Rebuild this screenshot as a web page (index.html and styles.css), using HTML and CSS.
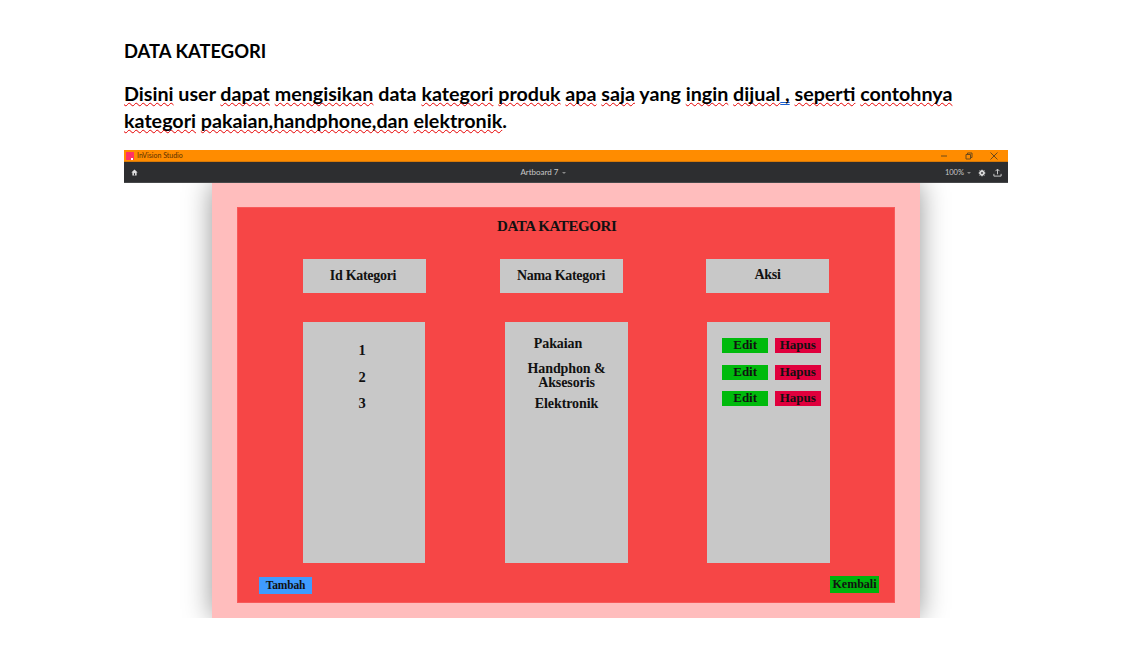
FILE: index.html
```html
<!DOCTYPE html>
<html lang="id">
<head>
<meta charset="utf-8">
<title>Data Kategori</title>
<link rel="stylesheet" href="styles.css">
</head>
<body>
<main class="doc">
  <h1 class="doc-title">DATA KATEGORI</h1>
  <p class="doc-text"><span class="sp">Disini</span> user <span class="sp">dapat</span> <span class="sp">mengisikan</span> data <span class="sp">kategori</span> <span class="sp">produk</span> <span class="sp">apa</span> <span class="sp">saja</span> yang <span class="sp">ingin</span> <span class="sp">dijual</span><span class="gr"> ,</span> <span class="sp">seperti</span> <span class="sp">contohnya</span><br><span class="sp">kategori</span> <span class="sp">pakaian,handphone,dan</span> <span class="sp">elektronik</span>.</p>
  <section class="window">
    <header class="titlebar">
      <span class="logo"><span class="logo-dot"></span></span>
      <span class="app-name">InVision Studio</span>
      <span class="win-controls">
        <svg class="win-icon" viewBox="0 0 10 10"><path d="M2 5h6" /></svg>
        <svg class="win-icon" viewBox="0 0 10 10"><path d="M2 3.500h4.500v4.500H2zM3.500 3.500V2H8v4.500H6.500" /></svg>
        <svg class="win-icon" viewBox="0 0 10 10"><path d="M1.500 1.500l7 7M8.500 1.500l-7 7" /></svg>
      </span>
    </header>
    <nav class="toolbar">
      <svg class="home" viewBox="0 0 10 10"><path d="M5 .8L.5 5h1.500v4.200h6V5h1.500z" /><path class="home-door" d="M4.200 6h1.600v3.200H4.200z" /></svg>
      <span class="board-name">Artboard 7<span class="caret"></span></span>
      <span class="tools">
        <span class="zoom-level">100%<span class="caret"></span></span>
        <svg class="gear" viewBox="0 0 10 10"><circle cx="5" cy="5" r="3" /><circle class="gear-hole" cx="5" cy="5" r="1.100" /><path d="M5 .8v1.500M5 7.700v1.500M.8 5h1.500M7.700 5h1.500M2 2l1 1M7 7l1 1M8 2L7 3M3 7L2 8" /></svg>
        <svg class="share" viewBox="0 0 10 10"><path d="M5 7V1.500M2.800 3.500L5 1.200l2.200 2.300M1 6.500v2.500h8V6.500" /></svg>
      </span>
    </nav>
    <div class="canvas">
      <div class="artboard">
        <div class="panel">
          <h2 class="panel-title">DATA KATEGORI</h2>
          <div class="head-row">
            <div class="head-cell head-id">Id Kategori</div>
            <div class="head-cell head-name">Nama Kategori</div>
            <div class="head-cell head-aksi">Aksi</div>
          </div>
          <div class="body-row">
            <div class="col col-id">
              <div class="id-item">1</div>
              <div class="id-item">2</div>
              <div class="id-item">3</div>
            </div>
            <div class="col col-name">
              <div class="name-first">Pakaian</div>
              <div class="name-item">Handphon &amp;<br>Aksesoris</div>
              <div class="name-last">Elektronik</div>
            </div>
            <div class="col col-action">
              <div class="action-row"><span class="btn edit">Edit</span><span class="btn hapus">Hapus</span></div>
              <div class="action-row"><span class="btn edit">Edit</span><span class="btn hapus">Hapus</span></div>
              <div class="action-row"><span class="btn edit">Edit</span><span class="btn hapus">Hapus</span></div>
            </div>
          </div>
          <div class="foot-row">
            <span class="btn-tambah">Tambah</span>
            <span class="btn-kembali">Kembali</span>
          </div>
        </div>
      </div>
    </div>
  </section>
</main>
</body>
</html>
```
FILE: styles.css
```css
* { box-sizing: border-box; }
html, body { margin: 0; padding: 0; background: #fff; }
body { width: 1136px; height: 652px; overflow: hidden; }
.doc { padding: 40px 0 0 124px; width: 1008px; font-family: "Lato", "Open Sans", sans-serif; color: #000; }
.doc-title { margin: 0; font-size: 18.400px; line-height: 23px; font-weight: 700; }
.doc-text { margin: 17px 0 0; font-size: 19.700px; line-height: 27px; font-weight: 700; white-space: nowrap; height: 56px; }
.sp { text-decoration: underline wavy #e60000 1px; text-underline-offset: 1px; text-decoration-skip-ink: none; }
.gr { text-decoration: underline double #1a5fd0 1px; text-underline-offset: 1px; text-decoration-skip-ink: none; }
.window { margin-top: 14px; width: 884px; height: 468px; display: flex; flex-direction: column; }
.titlebar { height: 12px; background: #ff8c00; display: flex; align-items: center; padding-left: 2px; border-bottom: 1px solid #d87a08; }
.logo { width: 8px; height: 8px; background: #ff3366; position: relative; flex: none; }
.logo-dot { position: absolute; right: 1px; bottom: 0; width: 2px; height: 2px; background: #fff; }
.app-name { margin-left: 3px; font: 7px/11px "Lato", sans-serif; color: #5a3000; }
.win-controls { margin-left: auto; display: flex; gap: 15px; padding-right: 9px; }
.win-icon { width: 10px; height: 10px; fill: none; stroke: #6d4a1a; stroke-width: 1; }
.toolbar { height: 21px; background: #2d2e30; display: flex; align-items: center; padding: 1px 6px 0 7px; border-bottom: 1px solid #47484a; }
.home { width: 7px; height: 7px; fill: #e0e0e0; }
.home-door { fill: #2d2e30; }
.board-name { margin: 0 auto; padding-left: 3px; font: 8px/19px "Lato", sans-serif; color: #c8c8c8; }
.caret { display: inline-block; margin-left: 3px; vertical-align: 1px; border: 2px solid transparent; border-top-color: #8a8a8a; border-bottom: 0; }
.tools { display: flex; align-items: center; gap: 7px; }
.zoom-level { font: 7.500px/19px "Lato", sans-serif; color: #c8c8c8; }
.gear { width: 8px; height: 8px; fill: #d8d8d8; stroke: #d8d8d8; stroke-width: 1.200; }
.gear-hole { fill: #2d2e30; stroke: none; }
.gear path { fill: none; }
.share { width: 9px; height: 9px; fill: none; stroke: #d8d8d8; stroke-width: 1; }
.canvas { flex: 1; background: #fff; overflow: hidden; padding: 0 88px; }
.artboard { height: 100%; background: #ffbdbd; padding: 24px 25px 15px; box-shadow: 0 0 26px rgba(0, 0, 0, 0.42); }
.panel { height: 396px; background: #f64646; font-family: "Liberation Serif", serif; font-weight: 700; color: #111; padding-top: 10px; box-shadow: inset 0 0 0 1px #f75a5a; }
.panel-title { margin: 0 0 0 260px; font-size: 15px; line-height: 19px; font-weight: 700; letter-spacing: -0.4px; }
.head-row { display: flex; margin-top: 23px; padding-left: 66px; height: 34px; }
.head-cell { width: 123px; background: #c8c8c8; font-size: 14px; line-height: 34px; text-align: center; letter-spacing: -0.3px; }
.head-id { padding-right: 3px; }
.head-name { margin-left: 74px; padding-right: 1px; }
.head-aksi { margin-left: 83px; line-height: 31px; }
.body-row { display: flex; margin-top: 29px; padding-left: 66px; height: 241px; }
.col { background: #c8c8c8; }
.col-id { width: 122px; padding: 15px 4px 0 0; font-size: 14.500px; line-height: 26.500px; text-align: center; }
.col-name { width: 123px; margin-left: 80px; font-size: 14px; line-height: 14px; text-align: center; padding-top: 15px; letter-spacing: -0.1px; }
.name-first { padding-right: 17px; }
.name-item { margin-top: 11px; }
.name-last { margin-top: 7px; }
.col-action { width: 123px; margin-left: 79px; padding: 16px 0 0 15px; }
.action-row { display: flex; gap: 6.300px; height: 15px; margin-bottom: 11.500px; }
.btn { width: 46.300px; height: 15px; font-size: 13px; line-height: 14px; text-align: center; }
.edit { background: #00ba0c; }
.hapus { background: #e0003d; }
.foot-row { display: flex; padding-left: 22px; margin-top: 13px; align-items: flex-start; }
.btn-tambah { width: 53px; height: 16.500px; margin-top: 1px; background: #3f9bff; font-size: 11.500px; line-height: 17px; text-align: center; letter-spacing: -0.2px; }
.btn-kembali { width: 49px; height: 16.700px; margin-left: 518px; background: #00b30c; font-size: 12px; line-height: 16px; text-align: center; }
```
